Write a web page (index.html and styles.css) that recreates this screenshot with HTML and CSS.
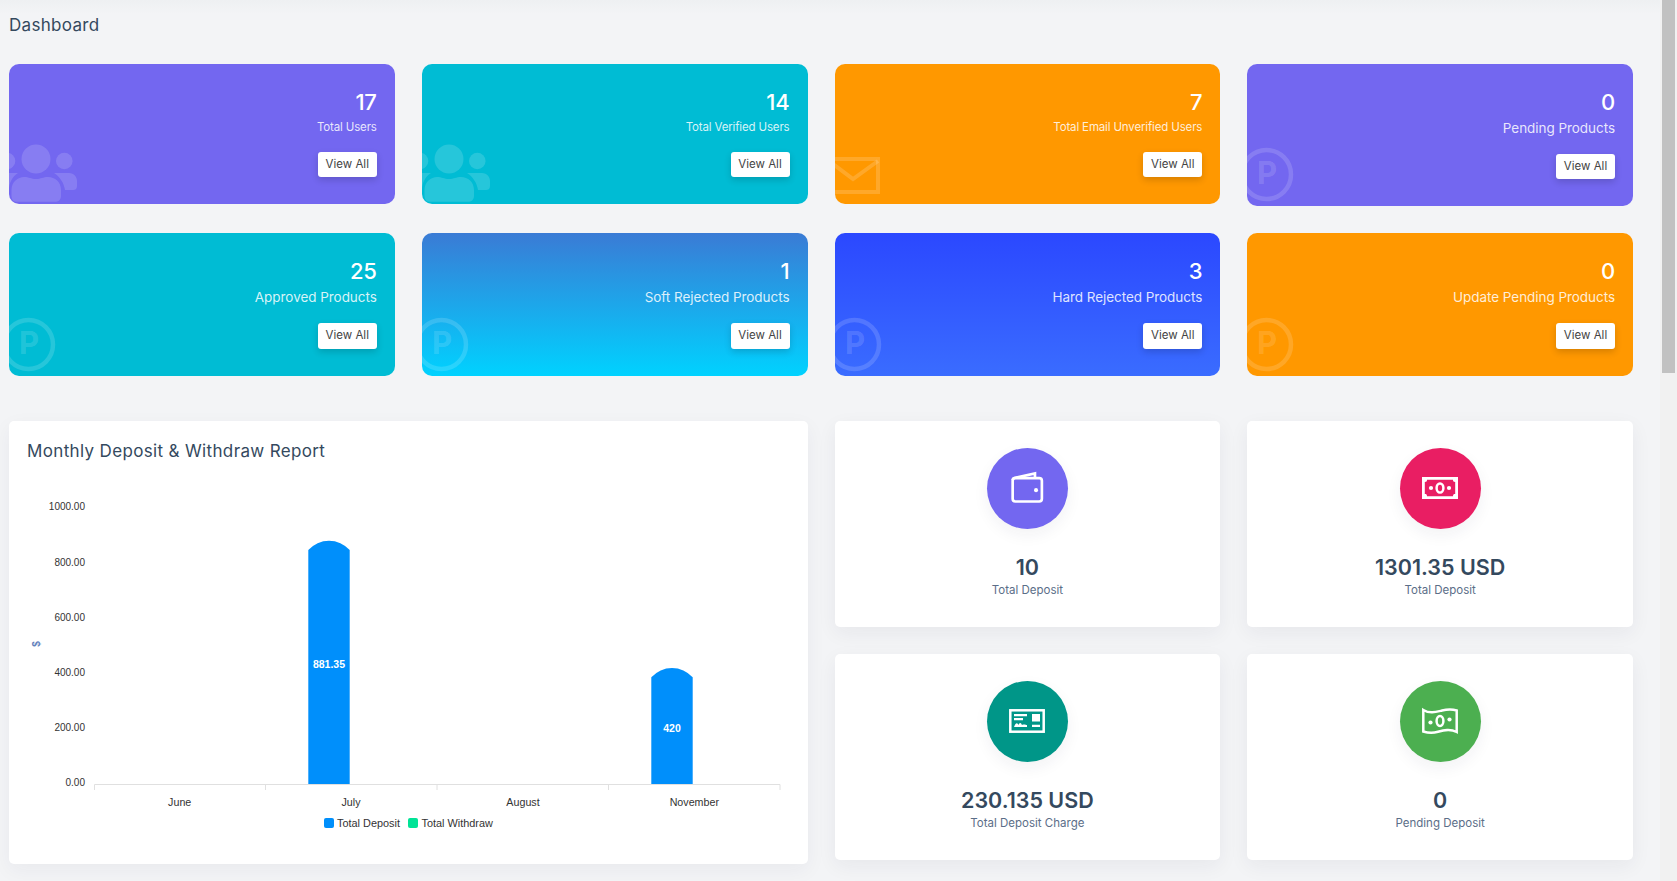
FILE: index.html
```html
<!DOCTYPE html>
<html lang="en">
<head>
  <meta charset="UTF-8">
  <meta name="viewport" content="width=device-width, initial-scale=1.0">
  <title>Dashboard</title>
  <link rel="stylesheet" href="styles.css">
</head>
<body>

<main class="content">
  <h1 class="page-title">Dashboard</h1>

  <!-- Summary cards -->
  <section class="stat-grid">
    <div class="stat-card bg-purple">
      <svg class="stat-bg-icon users-icon" viewBox="0 0 72 70" aria-hidden="true">
        <circle cx="27" cy="25" r="14.5"/>
        <circle cx="55.3" cy="27" r="8.3"/>
        <circle cx="-2" cy="27" r="8.3"/>
        <path d="M2.5 60V56C2.5 48 9 43 15 43C20 43 22 45 27 45C32 45 34 43 39 43C46 43 52 48 52 56V62C52 65 50 67.7 47 67.7H7C4 67.7 2.5 65 2.5 62Z"/>
        <path d="M45 39H60C65 39 68 43 68 47V52C68 55 66 56 64 56H56C55 49 51 43 45 39Z"/>
        <path d="M9 39H-6V56H0C0 49 3 43 9 39Z"/>
      </svg>
      <div class="stat-number">17</div>
      <div class="stat-label">Total Users</div>
      <a class="view-btn">View All</a>
    </div>

    <div class="stat-card bg-teal">
      <svg class="stat-bg-icon users-icon" viewBox="0 0 72 70" aria-hidden="true">
        <circle cx="27" cy="25" r="14.5"/>
        <circle cx="55.3" cy="27" r="8.3"/>
        <circle cx="-2" cy="27" r="8.3"/>
        <path d="M2.5 60V56C2.5 48 9 43 15 43C20 43 22 45 27 45C32 45 34 43 39 43C46 43 52 48 52 56V62C52 65 50 67.7 47 67.7H7C4 67.7 2.5 65 2.5 62Z"/>
        <path d="M45 39H60C65 39 68 43 68 47V52C68 55 66 56 64 56H56C55 49 51 43 45 39Z"/>
        <path d="M9 39H-6V56H0C0 49 3 43 9 39Z"/>
      </svg>
      <div class="stat-number">14</div>
      <div class="stat-label">Total Verified Users</div>
      <a class="view-btn">View All</a>
    </div>

    <div class="stat-card bg-orange">
      <svg class="stat-bg-icon mail-icon" viewBox="0 0 50 50" aria-hidden="true">
        <rect x="-6" y="5" width="49" height="33"/>
        <path d="M-6 7L18 25L43 7"/>
      </svg>
      <div class="stat-number">7</div>
      <div class="stat-label">Total Email Unverified Users</div>
      <a class="view-btn">View All</a>
    </div>

    <div class="stat-card bg-purple">
      <svg class="stat-bg-icon p-icon" viewBox="0 0 60 60" aria-hidden="true">
        <circle cx="19.5" cy="28.5" r="24.5"/>
        <text x="20" y="38">P</text>
      </svg>
      <div class="stat-number">0</div>
      <div class="stat-label large">Pending Products</div>
      <a class="view-btn">View All</a>
    </div>

    <div class="stat-card bg-teal">
      <svg class="stat-bg-icon p-icon" viewBox="0 0 60 60" aria-hidden="true">
        <circle cx="19.5" cy="28.5" r="24.5"/>
        <text x="20" y="38">P</text>
      </svg>
      <div class="stat-number">25</div>
      <div class="stat-label large">Approved Products</div>
      <a class="view-btn">View All</a>
    </div>

    <div class="stat-card bg-sky">
      <svg class="stat-bg-icon p-icon" viewBox="0 0 60 60" aria-hidden="true">
        <circle cx="19.5" cy="28.5" r="24.5"/>
        <text x="20" y="38">P</text>
      </svg>
      <div class="stat-number">1</div>
      <div class="stat-label large">Soft Rejected Products</div>
      <a class="view-btn">View All</a>
    </div>

    <div class="stat-card bg-blue">
      <svg class="stat-bg-icon p-icon" viewBox="0 0 60 60" aria-hidden="true">
        <circle cx="19.5" cy="28.5" r="24.5"/>
        <text x="20" y="38">P</text>
      </svg>
      <div class="stat-number">3</div>
      <div class="stat-label large">Hard Rejected Products</div>
      <a class="view-btn">View All</a>
    </div>

    <div class="stat-card bg-orange">
      <svg class="stat-bg-icon p-icon" viewBox="0 0 60 60" aria-hidden="true">
        <circle cx="19.5" cy="28.5" r="24.5"/>
        <text x="20" y="38">P</text>
      </svg>
      <div class="stat-number">0</div>
      <div class="stat-label large">Update Pending Products</div>
      <a class="view-btn">View All</a>
    </div>
  </section>

  <section class="report-grid">
    <!-- Chart card -->
    <div class="chart-card">
      <h2 class="chart-title">Monthly Deposit &amp; Withdraw Report</h2>
      <svg class="chart" viewBox="9 480 798.5 384">
        <g class="y-labels">
          <text x="85" y="509.5">1000.00</text>
          <text x="85" y="565.5">800.00</text>
          <text x="85" y="620.5">600.00</text>
          <text x="85" y="675.5">400.00</text>
          <text x="85" y="730.5">200.00</text>
          <text x="85" y="785.5">0.00</text>
        </g>
        <text class="y-title" transform="translate(40 644) rotate(-90)">$</text>

        <path class="axis" d="M94.5 784.5H780M94.5 784.5V790M265.5 784.5V790M437 784.5V790M608.5 784.5V790M780 784.5V790"/>

        <path class="bar" d="M308.3 784V550A27.7 27.7 0 0 1 349.7 550V784Z"/>
        <path class="bar" d="M651.3 784V677.3A27.7 27.7 0 0 1 692.7 677.3V784Z"/>
        <text class="bar-label" x="329" y="668">881.35</text>
        <text class="bar-label" x="672" y="731.7">420</text>

        <g class="x-labels">
          <text x="179.7" y="806">June</text>
          <text x="351" y="806">July</text>
          <text x="523" y="806">August</text>
          <text x="694.3" y="806">November</text>
        </g>

        <rect class="legend-deposit" x="324" y="818" width="10" height="10" rx="2"/>
        <text class="legend-text" x="337" y="827">Total Deposit</text>
        <rect class="legend-withdraw" x="408" y="818" width="10" height="10" rx="2"/>
        <text class="legend-text" x="421.5" y="827">Total Withdraw</text>
      </svg>
    </div>

    <!-- Deposit cards -->
    <div class="deposit-grid">
      <div class="deposit-card">
        <div class="deposit-circle bg-purple">
          <svg class="deposit-icon" viewBox="0 0 32 32" aria-hidden="true">
            <path class="line" d="M2.5 8.5C2.5 7.4 3 6.9 4 6.6L23.5 2.3V6.5"/>
            <rect class="line" x="2.5" y="6.7" width="27.5" height="22" rx="2.5"/>
            <circle cx="24.5" cy="18" r="1.9"/>
          </svg>
        </div>
        <div class="deposit-value">10</div>
        <div class="deposit-label">Total Deposit</div>
      </div>

      <div class="deposit-card">
        <div class="deposit-circle bg-pink">
          <svg class="deposit-icon wide" viewBox="0 0 36 22" aria-hidden="true">
            <path d="M0 0H36V22H0ZM5 2.8C5 4.5 4.5 5 2.8 5V17C4.5 17 5 17.5 5 19.2H31C31 17.5 31.5 17 33.2 17V5C31.5 5 31 4.5 31 2.8Z" fill-rule="evenodd"/>
            <ellipse class="line" cx="18" cy="11" rx="3.4" ry="4.6"/>
            <circle cx="9" cy="11" r="2.1"/>
            <circle cx="27" cy="11" r="2.1"/>
          </svg>
        </div>
        <div class="deposit-value">1301.35 USD</div>
        <div class="deposit-label">Total Deposit</div>
      </div>

      <div class="deposit-card">
        <div class="deposit-circle bg-green-dark">
          <svg class="deposit-icon wide" viewBox="0 0 36 24" aria-hidden="true">
            <rect class="line" x="1.3" y="1.3" width="33.4" height="21.4"/>
            <path d="M5 5H18V7.2H5ZM5 9H14V11.2H5ZM23 5H31V12.5H23ZM23 15.8H31V18H23Z"/>
            <path d="M5 18C7 13 8.5 14 9.5 16C11 13 12 14 13 16C15 15 17 16 18 16V18H5Z"/>
          </svg>
        </div>
        <div class="deposit-value">230.135 USD</div>
        <div class="deposit-label">Total Deposit Charge</div>
      </div>

      <div class="deposit-card">
        <div class="deposit-circle bg-green">
          <svg class="deposit-icon wide" viewBox="0 0 36 28" aria-hidden="true">
            <path class="line" d="M1.3 3C8 7 14 5 20 3.5C26 2 30 2 34.7 3.5V25C28 21.5 22 23 16 24.8C10 26.5 6 26 1.3 24.5Z"/>
            <ellipse class="line" cx="18" cy="14" rx="3.4" ry="5"/>
            <circle cx="8.5" cy="15.5" r="2.1"/>
            <circle cx="27.5" cy="12.5" r="2.1"/>
          </svg>
        </div>
        <div class="deposit-value">0</div>
        <div class="deposit-label">Pending Deposit</div>
      </div>
    </div>
  </section>
</main>

<div class="scrollbar"><div class="scrollbar-thumb"></div></div>

</body>
</html>
```

FILE: styles.css
```css
/* General reset and font styling */
* {
  margin: 0;
  padding: 0;
  box-sizing: border-box;
}

body {
  display: flex;
  height: 881px;
  overflow: hidden;
  background: #f3f4f6;
  font-family: 'Inter', 'Open Sans', sans-serif;
  color: #34495e;
}

.content {
  flex: 1;
  min-width: 0;
  padding: 12px 27px 0 9px;
  background: linear-gradient(#eef0f2, #f3f4f6 14px) no-repeat;
}

.page-title {
  font-size: 17px;
  font-weight: 400;
  line-height: 26px;
  margin-bottom: 26px;
  letter-spacing: 0.3px;
}

/* Summary cards */
.stat-grid {
  display: grid;
  grid-template-columns: repeat(4, 385.75px);
  gap: 27px;
  align-items: start;
}

.stat-card {
  position: relative;
  overflow: hidden;
  padding: 23.5px 18px 27px;
  border-radius: 10px;
  color: #fff;
  text-align: right;
}

.bg-purple { background: #7367f0; }
.bg-teal { background: #00bcd4; }
.bg-orange { background: #ff9800; }
.bg-pink { background: #e91e63; }
.bg-green { background: #4caf50; }
.bg-green-dark { background: #009688; }
.bg-sky { background: linear-gradient(#3a7bd5, #00d2ff); }
.bg-blue { background: linear-gradient(#2b48ff, #3a6cff); }

.stat-number {
  font-size: 22px;
  font-weight: 500;
  line-height: 28px;
  letter-spacing: -0.2px;
}

.stat-label {
  margin-top: 2.5px;
  font-size: 11.5px;
  line-height: 18px;
  letter-spacing: -0.15px;
  color: rgba(255, 255, 255, 0.85);
}

.stat-label.large {
  font-size: 13.5px;
  line-height: 20px;
  letter-spacing: -0.05px;
}

.view-btn {
  display: block;
  width: 59px;
  height: 25.4px;
  margin: 16px 0 0 auto;
  background: #fff;
  border-radius: 3px;
  box-shadow: 0 3px 7px rgba(0, 0, 0, 0.16);
  font-size: 11.5px;
  line-height: 24px;
  text-align: center;
  color: #444;
}

/* Faded icons in the card corner */
.stat-bg-icon {
  position: absolute;
  left: 0;
  bottom: 0;
  overflow: visible;
}

.users-icon {
  width: 72px;
  height: 70px;
  fill: rgba(255, 255, 255, 0.15);
}

.mail-icon {
  width: 50px;
  height: 50px;
  fill: none;
  stroke: rgba(255, 255, 255, 0.16);
  stroke-width: 4;
}

.p-icon {
  width: 60px;
  height: 60px;
}

.p-icon circle {
  fill: none;
  stroke: rgba(255, 255, 255, 0.15);
  stroke-width: 4.5;
}

.p-icon text {
  fill: rgba(255, 255, 255, 0.15);
  font-size: 31px;
  font-weight: 700;
  text-anchor: middle;
}

/* Lower section */
.report-grid {
  display: grid;
  grid-template-columns: 798.5px 1fr;
  gap: 27px;
  align-items: start;
  margin-top: 45.2px;
}

.chart-card {
  height: 443px;
  background: #fff;
  border-radius: 5px;
  box-shadow: 0 6px 20px rgba(30, 40, 70, 0.05);
}

.chart-title {
  height: 59px;
  padding: 18px 18px 0;
  font-size: 17px;
  font-weight: 400;
  line-height: 24px;
  letter-spacing: 0.35px;
}

.chart {
  display: block;
  width: 798.5px;
  height: 384px;
  font-family: 'Liberation Sans', Arial, sans-serif;
}

.chart text {
  font-size: 10px;
  fill: #333;
}

.y-labels text {
  text-anchor: end;
}

.chart .x-labels text {
  font-size: 10.7px;
  text-anchor: middle;
}

.chart .legend-text {
  font-size: 10.9px;
}

.chart .y-title {
  font-size: 10px;
  font-weight: 700;
  text-anchor: middle;
  fill: #5f80bb;
}

.axis {
  fill: none;
  stroke: #e0e0e0;
  stroke-width: 1;
}

.bar {
  fill: #008ffb;
}

.chart .bar-label {
  font-size: 10.5px;
  fill: #fff;
  font-weight: 700;
  text-anchor: middle;
}

.legend-deposit { fill: #008ffb; }
.legend-withdraw { fill: #00e396; }

/* Deposit cards */
.deposit-grid {
  display: grid;
  grid-template-columns: 385.75px 385.75px;
  gap: 27px;
}

.deposit-card {
  height: 206px;
  padding-top: 27px;
  background: #fff;
  border-radius: 5px;
  box-shadow: 0 6px 20px rgba(30, 40, 70, 0.06);
  text-align: center;
}

.deposit-circle {
  display: flex;
  align-items: center;
  justify-content: center;
  width: 81px;
  height: 81px;
  margin: 0 auto;
  border-radius: 50%;
  box-shadow: 0 6px 16px rgba(30, 40, 70, 0.06);
}

.deposit-icon {
  width: 34px;
  height: 34px;
  fill: #fff;
}

.deposit-icon.wide {
  width: 36px;
  height: auto;
}

.deposit-icon .line {
  fill: none;
  stroke: #fff;
  stroke-width: 2.5;
}

.deposit-value {
  margin-top: 24px;
  font-size: 21.5px;
  font-weight: 600;
  line-height: 28px;
}

.deposit-label {
  margin-top: 1px;
  font-size: 11.5px;
  line-height: 16px;
  color: #5b6e88;
}

/* Page scrollbar */
.scrollbar {
  flex: 0 0 17px;
  padding: 0 2px;
  background: #f1f1f1;
}

.scrollbar-thumb {
  height: 373px;
  background: #c1c1c1;
}
```
